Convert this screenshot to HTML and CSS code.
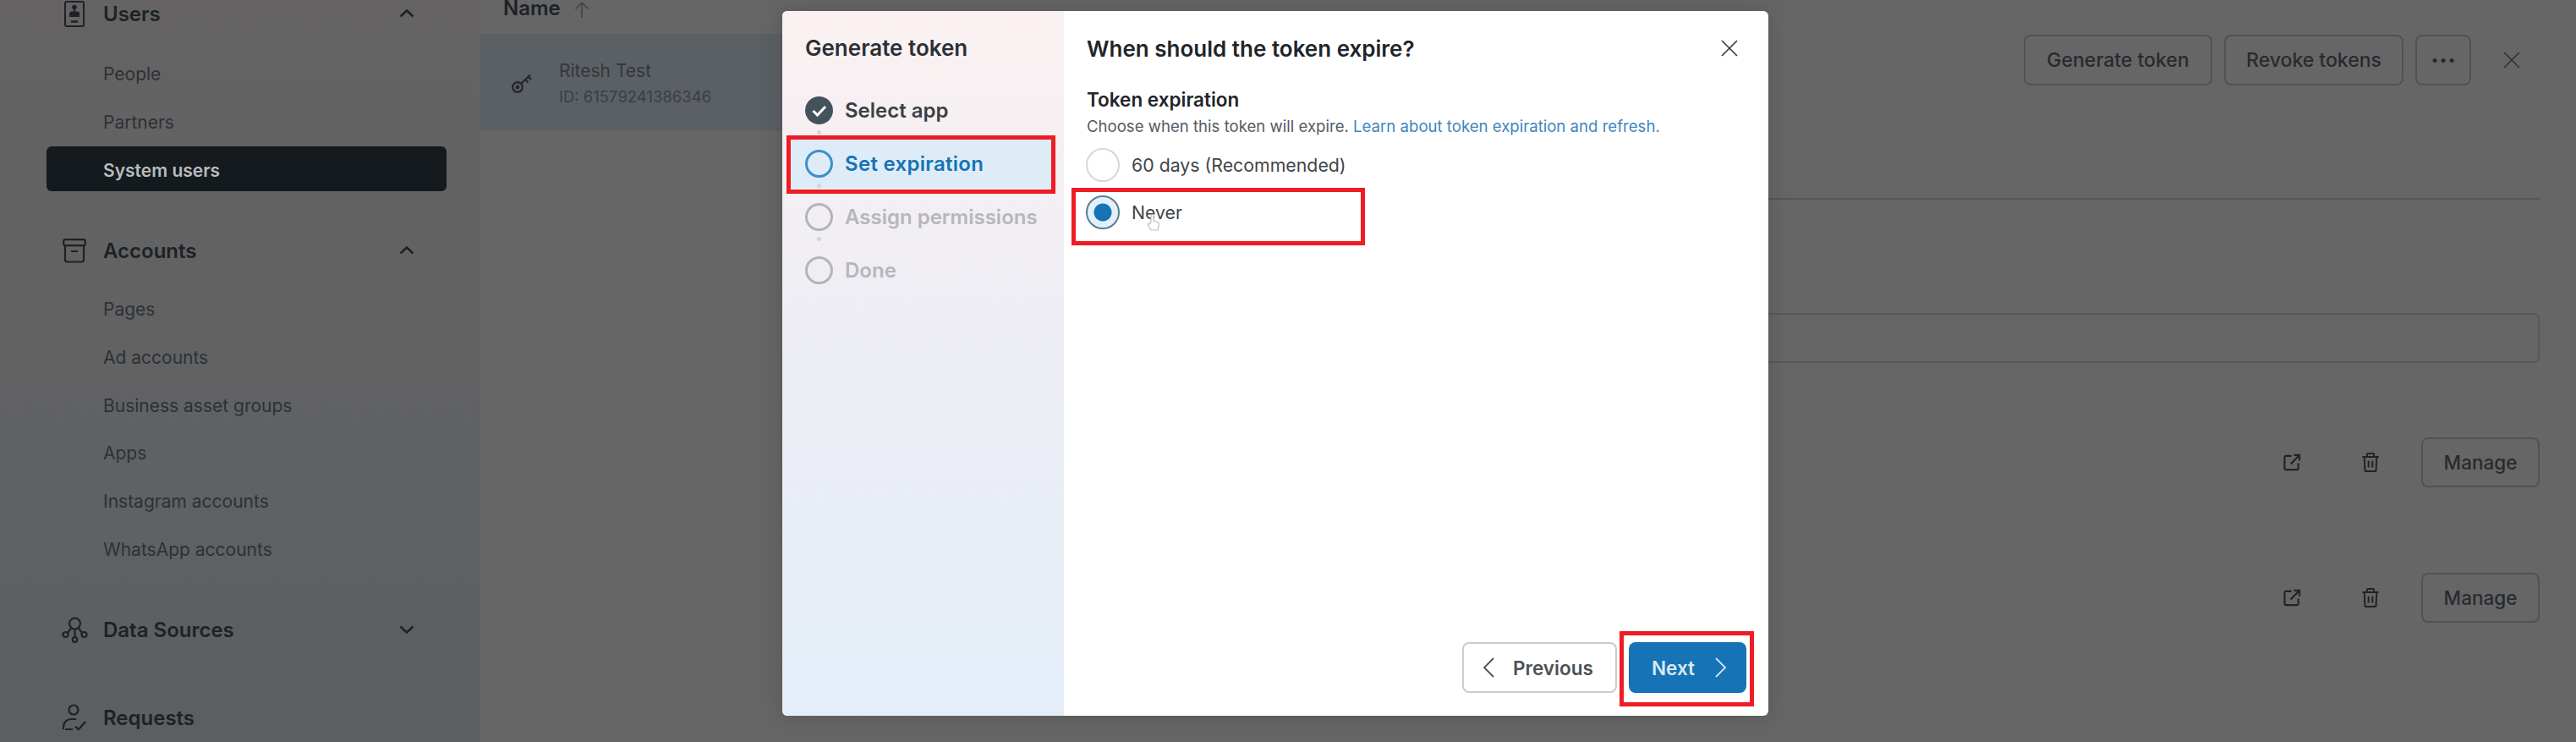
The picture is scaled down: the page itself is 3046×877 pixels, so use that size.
FILE: index.html
```html
<!DOCTYPE html>
<html lang="en">
<head>
    <meta charset="UTF-8">
    <meta name="viewport" content="width=device-width, initial-scale=1.0">
    <title>Generate token</title>
    <link rel="stylesheet" href="styles.css">
</head>
<body>
    <svg class="defs" width="0" height="0">
        <symbol id="chev-up" viewBox="0 0 18 10"><path d="M1.5 8.5 9 1.5l7.5 7" fill="none" stroke="currentColor" stroke-width="2.6"/></symbol>
        <symbol id="chev-down" viewBox="0 0 18 10"><path d="M1.5 1.5 9 8.5l7.5-7" fill="none" stroke="currentColor" stroke-width="2.6"/></symbol>
        <symbol id="close" viewBox="0 0 20 20"><path d="M1 1l18 18M19 1 1 19" fill="none" stroke="currentColor" stroke-width="1.6"/></symbol>
        <symbol id="external" viewBox="0 0 22 22"><path d="M10 3H3a1.5 1.5 0 0 0-1.5 1.5v14A1.5 1.5 0 0 0 3 20h14a1.5 1.5 0 0 0 1.500-1.500V12M9 13l10-10M13 2h7v7" fill="none" stroke="currentColor" stroke-width="2.2"/></symbol>
        <symbol id="trash" viewBox="0 0 24 26"><path d="M1.500 6h21M7.500 6V3a1.500 1.500 0 0 1 1.500-1.500h6A1.500 1.500 0 0 1 16.500 3v3M4 6l.8 16.500A2 2 0 0 0 6.800 24.500h10.400a2 2 0 0 0 2-2L20 6M9.500 11v8.500M14.500 11v8.500" fill="none" stroke="currentColor" stroke-width="2.200"/></symbol>
    </svg>

    <div class="page">
        <nav class="sidebar">
            <div class="nav-group">
                <div class="nav-head">
                    <span class="nav-icon">
                        <svg width="24" height="31" viewBox="0 0 24 31" fill="none" stroke="currentColor" stroke-width="2"><rect x="1" y="1" width="22" height="29" rx="2"/><circle cx="12" cy="7.500" r="1.800" fill="currentColor"/><path d="M12 10v3M7 18v-2.500a2 2 0 0 1 2-2h6a2 2 0 0 1 2 2V18z" fill="currentColor"/><path d="M8 24.500h8" stroke-width="2.500"/></svg>
                    </span>
                    <span class="nav-title">Users</span>
                    <svg class="nav-chev"><use href="#chev-up"/></svg>
                </div>
                <ul class="nav-list">
                    <li>People</li>
                    <li>Partners</li>
                    <li class="selected">System users</li>
                </ul>
            </div>
            <div class="nav-group">
                <div class="nav-head">
                    <span class="nav-icon">
                        <svg width="28" height="29" viewBox="0 0 28 29" fill="none" stroke="currentColor" stroke-width="2.200"><rect x="1.200" y="1.200" width="25.600" height="7" rx="2"/><path d="M3 8.500V25a2.500 2.500 0 0 0 2.500 2.500h17A2.500 2.500 0 0 0 25 25V8.500M10 15h8"/></svg>
                    </span>
                    <span class="nav-title">Accounts</span>
                    <svg class="nav-chev"><use href="#chev-up"/></svg>
                </div>
                <ul class="nav-list nav-list-tight">
                    <li>Pages</li>
                    <li>Ad accounts</li>
                    <li>Business asset groups</li>
                    <li>Apps</li>
                    <li>Instagram accounts</li>
                    <li>WhatsApp accounts</li>
                </ul>
            </div>
            <div class="nav-group nav-group-closed">
                <div class="nav-head">
                    <span class="nav-icon">
                        <svg width="31" height="31" viewBox="0 0 31 31" fill="none" stroke="currentColor" stroke-width="2.200"><circle cx="15.500" cy="8" r="6.500"/><circle cx="4.500" cy="21" r="3"/><circle cx="26.500" cy="21" r="3"/><circle cx="15.500" cy="27" r="2.800"/><path d="M15.500 14.500V24M11 13.500 7 19M20 13.500 24 19"/></svg>
                    </span>
                    <span class="nav-title">Data Sources</span>
                    <svg class="nav-chev"><use href="#chev-down"/></svg>
                </div>
            </div>
            <div class="nav-group">
                <div class="nav-head">
                    <span class="nav-icon">
                        <svg width="30" height="32" viewBox="0 0 30 32" fill="none" stroke="currentColor" stroke-width="2.200"><circle cx="14" cy="7" r="5.500"/><path d="M2 30v-3a9 9 0 0 1 9-9h6M13 30H4M16 27l4 3 8-9"/></svg>
                    </span>
                    <span class="nav-title">Requests</span>
                </div>
            </div>
        </nav>

        <section class="list-col">
            <div class="list-head">
                <span class="list-name">Name</span>
                <svg class="list-sort" width="18" height="20" viewBox="0 0 18 20" fill="none" stroke="currentColor" stroke-width="1.800"><path d="M9 20V2M1.500 9.500 9 2l7.500 7.500"/></svg>
            </div>
            <div class="list-row">
                <svg class="list-key" width="26" height="26" viewBox="0 0 26 26" fill="none" stroke="currentColor" stroke-width="2.400"><circle cx="8" cy="18" r="5.800"/><circle cx="8" cy="18" r="1.200" fill="currentColor"/><path d="M12.500 13.500 23 3.500M17 9l3.500 3.500M20.500 5.500 24 9"/></svg>
                <div>
                    <div class="list-title">Ritesh Test</div>
                    <div class="list-id">ID: 61579241386346</div>
                </div>
            </div>
        </section>

        <section class="detail-col">
            <div class="toolbar">
                <button class="btn btn-top">Generate token</button>
                <button class="btn btn-top">Revoke tokens</button>
                <button class="btn btn-more">&middot;&middot;&middot;</button>
                <span class="toolbar-close"><svg width="20" height="20"><use href="#close"/></svg></span>
            </div>
            <div class="tabs"></div>
            <div class="search"></div>
            <div class="asset-rows">
                <div class="asset-row">
                    <span class="asset-icon"><svg width="21" height="21"><use href="#external"/></svg></span>
                    <span class="asset-icon"><svg width="22" height="25"><use href="#trash"/></svg></span>
                    <button class="btn btn-manage">Manage</button>
                </div>
                <div class="asset-row">
                    <span class="asset-icon"><svg width="21" height="21"><use href="#external"/></svg></span>
                    <span class="asset-icon"><svg width="22" height="25"><use href="#trash"/></svg></span>
                    <button class="btn btn-manage">Manage</button>
                </div>
            </div>
        </section>
    </div>

    <div class="modal">
        <aside class="modal-steps">
            <h2 class="steps-title">Generate token</h2>
            <ol class="steps">
                <li class="step step-done">
                    <span class="step-dot"><svg width="33" height="33" viewBox="0 0 33 33"><circle cx="16.500" cy="16.500" r="16.500" fill="#44525c"/><path d="M9.500 17l5 5 9.500-10" fill="none" stroke="#fff" stroke-width="3"/></svg></span>
                    Select app
                </li>
                <li class="step step-active"><span class="step-dot"></span>Set expiration</li>
                <li class="step step-todo"><span class="step-dot"></span>Assign permissions</li>
                <li class="step step-todo"><span class="step-dot"></span>Done</li>
            </ol>
        </aside>
        <div class="modal-body">
            <div class="modal-head">
                <h2 class="modal-title">When should the token expire?</h2>
                <svg class="modal-close" width="20" height="20"><use href="#close"/></svg>
            </div>
            <div class="field-label">Token expiration</div>
            <p class="field-help">Choose when this token will expire. <a href="#">Learn about token expiration and refresh.</a></p>
            <div class="radio-row"><span class="radio"></span>60 days (Recommended)</div>
            <div class="radio-row">
                <span class="radio radio-on"></span>
                <span class="never">Never
                    <svg class="cursor" width="16" height="22" viewBox="0 0 16 22" fill="#fff" stroke="#b9bcc0" stroke-width="1.200"><path d="M5 10V3a1.500 1.500 0 0 1 3 0v6l5 1.500c1 .4 1.500 1 1.500 2L13 20H5l-3.500-6c-.5-1 .8-2.200 2-1.200z"/></svg>
                </span>
            </div>
            <div class="modal-foot">
                <button class="btn btn-prev">
                    <svg width="14" height="26" viewBox="0 0 14 26" fill="none" stroke="currentColor" stroke-width="1.800"><path d="M13 2 2 13l11 11"/></svg>
                    Previous
                </button>
                <button class="btn btn-next">
                    Next
                    <svg width="14" height="26" viewBox="0 0 14 26" fill="none" stroke="currentColor" stroke-width="1.800"><path d="M1 2l11 11L1 24"/></svg>
                </button>
            </div>
        </div>
        <!-- red annotation boxes drawn on top of the screenshot -->
        <span class="mark mark-step"></span>
        <span class="mark mark-radio"></span>
        <span class="mark mark-next"></span>
    </div>
</body>
</html>
```
FILE: styles.css
```css
* {
    box-sizing: border-box;
}
html, body {
    height: 877px;
    margin: 0;
    overflow: hidden;
}
body {
    position: relative;
    font-family: Inter, "Liberation Sans", sans-serif;
    background: #666666;
    color: #2b3036;
}
.defs {
    position: absolute;
}
ul, ol {
    list-style: none;
    margin: 0;
    padding: 0;
}
button {
    font-family: inherit;
}
.page {
    display: flex;
    height: 877px;
}

/* sidebar */
.sidebar {
    flex: 0 0 568px;
    height: 889px;
    margin-top: -12px;
    padding: 0 40px 0 55px;
    background: linear-gradient(180deg, #656364 0%, #626263 45%, #5b5f62 100%);
}
.nav-group {
    margin-bottom: 42.500px;
}
.nav-group-closed {
    margin-bottom: 48px;
}
.nav-head {
    display: flex;
    align-items: center;
    height: 56px;
    padding: 0 38px 0 13px;
    color: #1d2226;
}
.nav-icon {
    display: flex;
    justify-content: center;
    width: 40px;
    margin-right: 14px;
}
.nav-title {
    flex: 1;
    font-size: 24px;
    font-weight: 600;
}
.nav-chev {
    width: 18px;
    height: 10px;
}
.nav-list {
    margin-top: 15px;
}
.nav-list-tight {
    margin-top: 13px;
}
.nav-list li {
    height: 53px;
    margin-bottom: 3.750px;
    padding: 15px 0 0 67px;
    font-size: 21px;
    line-height: 28px;
    color: #2c3136;
}
.nav-list li.selected {
    background: #141a1e;
    border-radius: 6px;
    color: #b9bcbe;
    font-weight: 600;
}

/* list of system users */
.list-col {
    flex: 0 0 742px;
}
.list-head {
    display: flex;
    align-items: flex-end;
    height: 40px;
    padding: 0 0 17px 27px;
    margin-bottom: 0;
}
.list-name {
    font-size: 24px;
    font-weight: 600;
    line-height: 26px;
    color: #1d2226;
}
.list-sort {
    margin: 0 0 2px 16px;
    color: #45494d;
}
.list-row {
    display: flex;
    align-items: center;
    height: 115px;
    padding-left: 36px;
    background: #5b6065;
}
.list-key {
    margin-right: 31px;
    color: #25292d;
}
.list-title {
    font-size: 21px;
    line-height: 28px;
    color: #33373b;
}
.list-id {
    margin-top: 4px;
    font-size: 18.500px;
    line-height: 24px;
    color: #3b3f43;
}

/* details on the right */
.detail-col {
    flex: 1;
    padding: 41px 43px 0 0;
}
.toolbar {
    display: flex;
    justify-content: flex-end;
    gap: 14px;
    height: 60px;
}
.btn {
    height: 60px;
    padding: 0;
    border: 2px solid #4d5358;
    border-radius: 8px;
    background: transparent;
    font-size: 23px;
    color: #262b30;
}
.btn-top {
    font-weight: 500;
}
.toolbar .btn-top:nth-child(1) {
    width: 223px;
}
.toolbar .btn-top:nth-child(2) {
    width: 212px;
}
.btn-more {
    width: 66px;
    font-size: 30px;
    font-weight: 700;
    line-height: 20px;
}
.toolbar-close {
    display: flex;
    align-items: center;
    justify-content: center;
    width: 67px;
    color: #2f3337;
}
.tabs {
    height: 135px;
    border-bottom: 2px solid #52565b;
}
.search {
    height: 59px;
    margin-top: 134px;
    border: 2px solid #55595e;
    border-radius: 6px;
}
.asset-rows {
    display: flex;
    flex-direction: column;
    gap: 101px;
    margin-top: 88px;
}
.asset-row {
    display: flex;
    justify-content: flex-end;
    align-items: center;
    gap: 27px;
}
.asset-icon {
    display: flex;
    justify-content: center;
    width: 66px;
    color: #1f2327;
}
.btn-manage {
    width: 140px;
    height: 59px;
    font-size: 22.500px;
    font-weight: 500;
}

/* dialog */
.modal {
    position: absolute;
    left: 925px;
    top: 13px;
    display: flex;
    width: 1166px;
    height: 833px;
    background: #fff;
    border-radius: 6px;
    overflow: hidden;
    box-shadow: 0 0 24px rgba(40, 40, 40, 0.25);
}
.modal-steps {
    flex: 0 0 333px;
    padding: 29px 15px 0 11px;
    background: linear-gradient(180deg, #fbf1f1 0%, #efeef4 40%, #e8edf6 75%, #e3eef8 100%);
}
.steps-title {
    margin: 0 0 29px 16px;
    font-size: 26px;
    font-weight: 600;
    line-height: 30px;
    color: #2a3035;
}
.steps {
    display: flex;
    flex-direction: column;
    gap: 4px;
}
.step {
    position: relative;
    display: flex;
    align-items: center;
    gap: 14px;
    height: 59px;
    padding-left: 16px;
    font-size: 24px;
    font-weight: 600;
}
.step + .step::before {
    content: "";
    position: absolute;
    left: 30px;
    top: -10px;
    width: 5px;
    height: 5px;
    border-radius: 50%;
    background: #d3d4d8;
}
.step-dot {
    flex: 0 0 33px;
    height: 33px;
    border: 3px solid #b3b6b9;
    border-radius: 50%;
}
.step-done {
    color: #3a4046;
}
.step-done .step-dot {
    border: 0;
}
.step-active {
    background: #deecf8;
    color: #1573b6;
    letter-spacing: 0.3px;
}
.step-active .step-dot {
    border-color: #3d8fc6;
}
.step-todo {
    color: #b5b7bb;
}
.modal-body {
    flex: 1;
    display: flex;
    flex-direction: column;
    padding: 29px 26px 27px 27px;
}
.modal-head {
    display: flex;
    justify-content: space-between;
    align-items: center;
    height: 30px;
    padding-right: 10px;
}
.modal-title {
    margin: 0;
    font-size: 26px;
    font-weight: 600;
    color: #1f2529;
}
.modal-close {
    color: #33383d;
}
.field-label {
    margin-top: 32px;
    font-size: 22.500px;
    font-weight: 600;
    line-height: 28px;
    color: #1f2529;
}
.field-help {
    margin: 4px 0 5px;
    font-size: 18.600px;
    line-height: 26px;
    color: #555b60;
}
.field-help a {
    color: #3f86bd;
    text-decoration: none;
}
.radio-row {
    display: flex;
    align-items: center;
    gap: 14px;
    height: 56px;
    font-size: 21.300px;
    color: #3f4549;
}
.radio {
    flex: 0 0 40px;
    height: 40px;
    margin-left: -1px;
    border: 2px solid #d6d7dc;
    border-radius: 50%;
}
.radio-on {
    border-color: #5a7d96;
    background: radial-gradient(circle, #1573b6 0, #1573b6 10px, #e3f0fa 11px);
}
.never {
    position: relative;
}
.cursor {
    position: absolute;
    left: 18px;
    top: 14px;
}
.modal-foot {
    display: flex;
    justify-content: flex-end;
    gap: 14px;
    margin-top: auto;
}
.modal-foot .btn {
    display: flex;
    align-items: center;
    height: 60px;
    font-size: 22.500px;
    font-weight: 600;
}
.btn-prev {
    width: 183px;
    gap: 22px;
    padding-left: 22px;
    border-color: #c9cbce;
    color: #4b5257;
}
.btn-next {
    width: 139px;
    justify-content: space-between;
    padding: 0 21px 0 25px;
    border-color: #1573b6;
    background: #1573b6;
    color: #d9e8f4;
}
.mark {
    position: absolute;
    border: 5px solid #ee1c25;
}
.mark-step {
    left: 5px;
    top: 147px;
    width: 318px;
    height: 69px;
}
.mark-radio {
    left: 342px;
    top: 209px;
    width: 347px;
    height: 68px;
}
.mark-next {
    left: 990px;
    top: 733px;
    width: 159px;
    height: 89px;
}
```
